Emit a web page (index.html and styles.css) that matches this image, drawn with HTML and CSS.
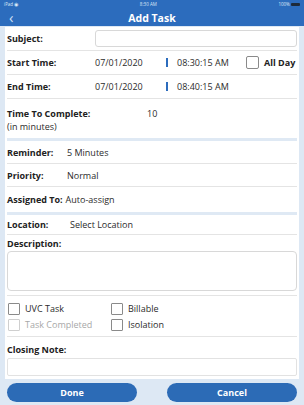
FILE: index.html
```html
<!DOCTYPE html>
<html lang="en">

<head>
    <link rel="stylesheet" href="styles.css">
</head>

<body>
    <div id="top-bar">
        <div id="status-bar">
            <span>iPad &#9673;</span>
            <span>8:30 AM</span>
            <span class="battery">100% <i></i></span>
        </div>
        <div id="nav-bar">
            <span id="back-btn">&lsaquo;</span>
            <span id="title">Add Task</span>
        </div>
    </div>

    <div id="page">
        <div id="card">
            <div class="row subject-row">
                <span class="label">Subject:</span>
                <div class="text-box"></div>
            </div>

            <div class="row time-row">
                <span class="label col-label">Start Time:</span>
                <span class="date">07/01/2020</span>
                <span class="bar"></span>
                <span class="time">08:30:15 AM</span>
                <span class="box"></span>
                <span class="label">All Day</span>
            </div>
            <div class="row time-row">
                <span class="label col-label">End Time:</span>
                <span class="date">07/01/2020</span>
                <span class="bar"></span>
                <span class="time">08:40:15 AM</span>
            </div>
            <div class="row ttc-row section-end">
                <div class="ttc-label">
                    <span class="label">Time To Complete:</span>
                    <span>(in minutes)</span>
                </div>
                <span class="ttc-value">10</span>
            </div>

            <div class="row info-row">
                <span class="label">Reminder:</span>
                <span class="value">5 Minutes</span>
            </div>
            <div class="row info-row">
                <span class="label">Priority:</span>
                <span class="value">Normal</span>
            </div>
            <div class="row info-row assigned-row section-end">
                <span class="label">Assigned To:</span>
                <span>Auto-assign</span>
            </div>

            <div class="row location-row">
                <span class="label">Location:</span>
                <span class="loc-value">Select Location</span>
            </div>
            <div class="block desc-block">
                <div class="label">Description:</div>
                <div class="text-area"></div>
            </div>

            <div class="block checks section-end">
                <div class="check"><span class="box"></span>UVC Task</div>
                <div class="check"><span class="box"></span>Billable</div>
                <div class="check disabled"><span class="box"></span>Task Completed</div>
                <div class="check"><span class="box"></span>Isolation</div>
            </div>

            <div class="block note-block">
                <div class="label">Closing Note:</div>
                <div class="note-box"></div>
            </div>
        </div>

        <div id="buttons-div">
            <button>Done</button>
            <button>Cancel</button>
        </div>
    </div>
</body>

</html>
```

FILE: styles.css
```css
body {
    margin: 0;
    width: 304px;
    height: 405px;
    overflow: hidden;
    font-family: "Open Sans", sans-serif;
    font-size: 9px;
    color: #2b2b2b;
    background-color: #dde8f4;
}

#top-bar {
    background-color: #2c6cbd;
    color: white;
}

#status-bar {
    display: flex;
    justify-content: space-between;
    height: 9px;
    padding: 0 4px;
    font-size: 4.5px;
    line-height: 8px;
    color: #dfe9f7;
}

.battery i {
    display: inline-block;
    width: 9px;
    height: 3px;
    background-color: #1d2a3a;
    border-radius: 1px;
    vertical-align: middle;
}

#nav-bar {
    display: flex;
    align-items: center;
    justify-content: center;
    position: relative;
    height: 17px;
}

#back-btn {
    position: absolute;
    left: 9px;
    top: -2px;
    font-size: 15px;
    color: #cfe0f5;
}

#title {
    font-size: 10.5px;
    font-weight: bold;
}

#page {
    padding: 1px 5px 0 5px;
}

#card {
    background-color: white;
    padding: 0 2px 3px 2px;
}

.label {
    font-weight: bold;
    color: #222;
}

.row {
    display: flex;
    align-items: center;
    border-bottom: 1px solid #e4e4e4;
}

.section-end {
    border-bottom: 3px solid #dfe9f4;
}

.subject-row {
    height: 23px;
}

.subject-row .label {
    width: 88px;
}

.text-box {
    flex: 1;
    height: 15px;
    border: 1px solid #d8d8d8;
    border-radius: 3px;
}

.time-row {
    height: 23px;
}

.col-label {
    width: 88px;
}

.date {
    width: 71px;
}

.bar {
    width: 2px;
    height: 9px;
    background-color: #2c6cbd;
    margin-right: 9px;
}

.time {
    width: 69px;
}

.box {
    display: inline-block;
    width: 10px;
    height: 10px;
    border: 1px solid #8a8a8a;
    border-radius: 1px;
    margin-right: 5px;
}

.time-row .box {
    width: 11px;
    height: 11px;
    border-radius: 2px;
}

.ttc-row {
    align-items: flex-start;
    padding-top: 9px;
    box-sizing: border-box;
    height: 42px;
}

.ttc-label {
    display: flex;
    flex-direction: column;
    line-height: 12.5px;
    width: 140px;
}

.ttc-value {
    line-height: 12.5px;
}

.info-row {
    height: 22px;
}

.info-row .label {
    width: 60px;
}

.assigned-row {
    height: 25px;
}

.assigned-row .label {
    width: auto;
    margin-right: 3px;
}

.location-row {
    height: 19px;
}

.location-row .label {
    width: 63px;
}

.block {
    border-bottom: 1px solid #e4e4e4;
}

.desc-block {
    padding: 2px 0 4px 0;
}

.text-area {
    height: 38px;
    margin-top: 1px;
    border: 1px solid #d8d8d8;
    border-radius: 4px;
}

.checks {
    display: grid;
    grid-template-columns: 103px 1fr;
    row-gap: 3px;
    padding: 6px 0 5px 1px;
}

.check {
    display: flex;
    align-items: center;
    line-height: 13px;
}

.check.disabled {
    color: #a8a8a8;
}

.check.disabled .box {
    border-color: #cfcfcf;
}

.note-block {
    padding: 6px 0 0 0;
    border-bottom: none;
}

.note-box {
    height: 16px;
    margin-top: 2px;
    border: 1px solid #e2e2e2;
    border-radius: 2px;
}

#buttons-div {
    display: flex;
    justify-content: space-between;
    padding: 4px 2px 0 2px;
}

button {
    width: 130px;
    height: 19px;
    border: none;
    border-radius: 10px;
    background-color: #2c6bb6;
    color: white;
    font-family: "Open Sans", sans-serif;
    font-size: 9px;
    font-weight: bold;
    cursor: pointer;
}
```
